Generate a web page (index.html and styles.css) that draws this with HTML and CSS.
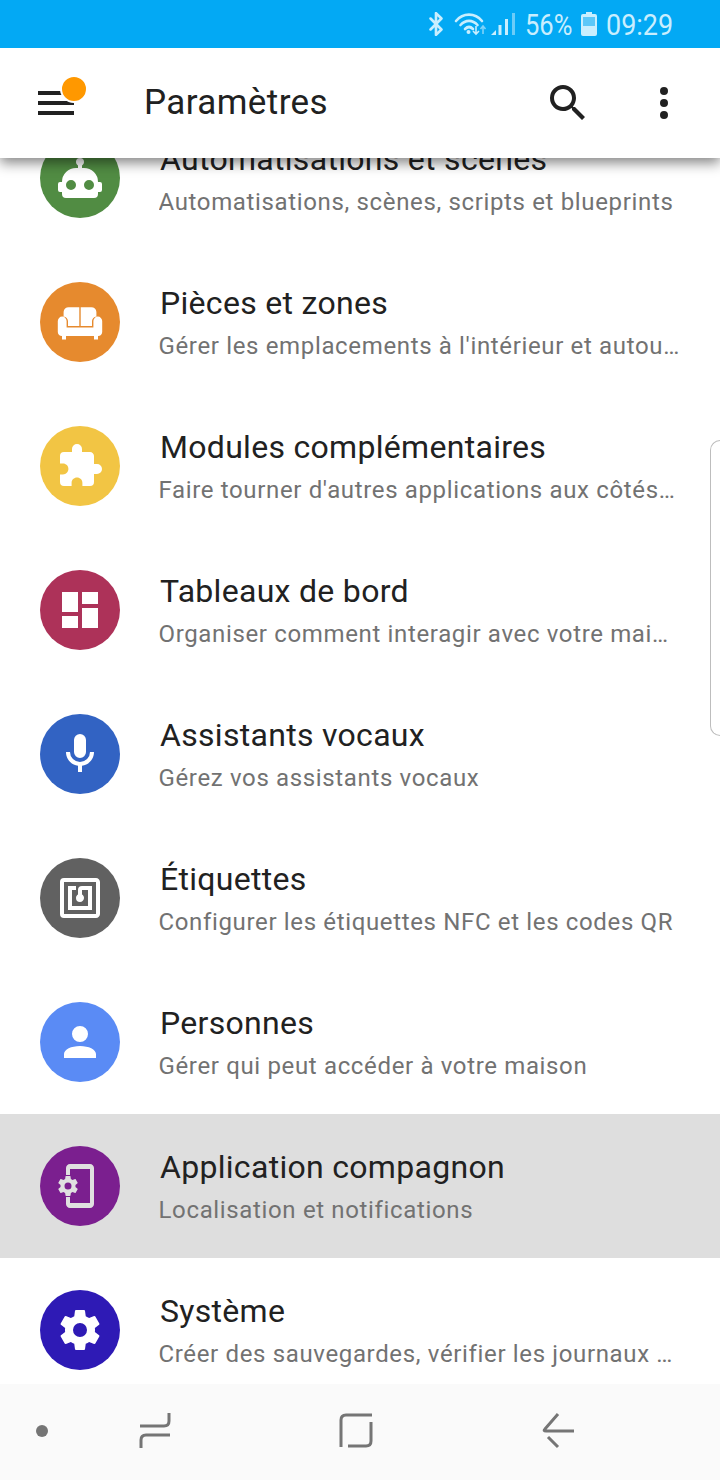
FILE: index.html
```html
<!DOCTYPE html>
<html lang="fr">
<head>
<meta charset="utf-8">
<title>Paramètres</title>
<link rel="stylesheet" href="styles.css">
</head>
<body>
<svg class="defs" width="0" height="0" aria-hidden="true">
  <symbol id="cog" viewBox="0 0 24 24"><path d="M12,15.5A3.5,3.5 0 0,1 8.5,12A3.5,3.5 0 0,1 12,8.5A3.5,3.5 0 0,1 15.5,12A3.5,3.5 0 0,1 12,15.5M19.43,12.97C19.47,12.65 19.5,12.33 19.5,12C19.5,11.67 19.47,11.34 19.43,11L21.54,9.37C21.73,9.22 21.78,8.95 21.66,8.73L19.66,5.27C19.54,5.05 19.27,4.96 19.05,5.05L16.56,6.05C16.04,5.66 15.5,5.32 14.87,5.07L14.5,2.42C14.46,2.18 14.25,2 14,2H10C9.75,2 9.54,2.18 9.5,2.42L9.13,5.07C8.5,5.32 7.96,5.66 7.44,6.05L4.95,5.05C4.73,4.96 4.46,5.05 4.34,5.27L2.34,8.73C2.21,8.95 2.27,9.22 2.46,9.37L4.57,11C4.53,11.34 4.5,11.67 4.5,12C4.5,12.33 4.53,12.65 4.57,12.97L2.46,14.63C2.27,14.78 2.21,15.05 2.34,15.27L4.34,18.73C4.46,18.95 4.73,19.03 4.95,18.95L7.44,17.94C7.96,18.34 8.5,18.68 9.13,18.93L9.5,21.58C9.54,21.82 9.75,22 10,22H14C14.25,22 14.46,21.82 14.5,21.58L14.87,18.93C15.5,18.67 16.04,18.34 16.56,17.94L19.05,18.95C19.27,19.03 19.54,18.95 19.66,18.73L21.66,15.27C21.78,15.05 21.73,14.78 21.54,14.63L19.43,12.97Z"/></symbol>
</svg>
<div class="app">
  <div class="status">
    <svg class="st-bt" viewBox="0 0 16 22"><path d="M3 6l10 10-5 5V1l5 5L3 16"/></svg>
    <svg class="st-wifi" viewBox="0 0 32 24"><path class="arc" d="M1 8C8-0.5 20-0.5 27 8M5.5 12C10.5 6.5 17.5 6.5 22.5 12M10 16C12.5 13.5 15.5 13.5 18 16"/><circle class="fill" cx="13.5" cy="19" r="2"/><path class="arrow" d="M21 13v8m-3-3l3 3 3-3"/><path class="arrow dim" d="M28 21v-8m-2.500 3l2.500-3 2.500 3"/></svg>
    <svg class="st-signal" viewBox="0 0 26 24"><path class="fill" d="M1 23l5-5v5z"/><rect class="fill" x="8.500" y="13" width="3" height="10"/><rect class="fill" x="15" y="7" width="3" height="16"/><rect class="fill dim" x="22" y="1" width="3" height="22"/></svg>
    <span class="st-pct">56%</span>
    <svg class="st-bat" viewBox="0 0 16 24"><path class="bat-body" d="M5 0h6v2h3a2 2 0 0 1 2 2v18a2 2 0 0 1-2 2H2a2 2 0 0 1-2-2V4a2 2 0 0 1 2-2h3z"/><rect class="bat-level" x="2" y="5" width="12" height="9"/></svg>
    <span class="st-time">09:29</span>
  </div>
  <header class="topbar">
    <div class="menu">
      <svg class="menu-bars" viewBox="0 0 36 24"><path d="M0 0h36v4H0zM0 10h36v4H0zM0 20h36v4H0z"/></svg>
      <span class="menu-badge"></span>
    </div>
    <h1 class="title">Paramètres</h1>
    <svg class="top-icon search" viewBox="0 0 24 24"><path d="M9.5,3A6.5,6.500 0 0,1 16,9.500C16,11.110 15.410,12.590 14.440,13.730L14.710,14H15.500L20.500,19L19,20.500L14,15.500V14.710L13.730,14.440C12.590,15.410 11.110,16 9.500,16A6.500,6.500 0 0,1 3,9.500A6.500,6.500 0 0,1 9.500,3M9.500,5C7,5 5,7 5,9.500C5,12 7,14 9.500,14C12,14 14,12 14,9.500C14,7 12,5 9.500,5Z"/></svg>
    <svg class="top-icon dots" viewBox="0 0 24 24"><path d="M12,16A2,2 0 0,1 14,18A2,2 0 0,1 12,20A2,2 0 0,1 10,18A2,2 0 0,1 12,16M12,10A2,2 0 0,1 14,12A2,2 0 0,1 12,14A2,2 0 0,1 10,12A2,2 0 0,1 12,10M12,4A2,2 0 0,1 14,6A2,2 0 0,1 12,8A2,2 0 0,1 10,6A2,2 0 0,1 12,4Z"/></svg>
  </header>
  <main class="list">
    <div class="row">
      <div class="badge c-green"><svg viewBox="0 0 24 24"><path d="M12,2A2,2 0 0,1 14,4C14,4.740 13.600,5.390 13,5.730V7H14A7,7 0 0,1 21,14H22A1,1 0 0,1 23,15V18A1,1 0 0,1 22,19H21V20A2,2 0 0,1 19,22H5A2,2 0 0,1 3,20V19H2A1,1 0 0,1 1,18V15A1,1 0 0,1 2,14H3A7,7 0 0,1 10,7H11V5.730C10.400,5.390 10,4.740 10,4A2,2 0 0,1 12,2M7.500,13A2.500,2.500 0 0,0 5,15.500A2.500,2.500 0 0,0 7.500,18A2.500,2.500 0 0,0 10,15.500A2.500,2.500 0 0,0 7.500,13M16.500,13A2.500,2.500 0 0,0 14,15.500A2.500,2.500 0 0,0 16.500,18A2.500,2.500 0 0,0 19,15.500A2.500,2.500 0 0,0 16.500,13Z"/></svg></div>
      <div class="text"><div class="name">Automatisations et scènes</div><div class="sub">Automatisations, scènes, scripts et blueprints</div></div>
    </div>
    <div class="row">
      <div class="badge c-orange"><svg viewBox="0 0 24 24"><path d="M3.800 7A2.500 2.500 0 0 1 6.300 4.600H11.650V14H6V11.500C6 10.400 5 9.300 3.800 9.200ZM12.350 4.600H17.700A2.500 2.500 0 0 1 20.200 7V9.200C19 9.300 18 10.400 18 11.500V14H12.350ZM0.900 11.500A2.200 2.200 0 0 1 5.300 11.500V14.700H18.700V11.500A2.200 2.200 0 0 1 23.100 11.500V17A2 2 0 0 1 21 19V20.700H19V19H5V20.700H3V19A2 2 0 0 1 0.900 17Z"/></svg></div>
      <div class="text"><div class="name">Pièces et zones</div><div class="sub">Gérer les emplacements à l'intérieur et autour de votre maison</div></div>
    </div>
    <div class="row">
      <div class="badge c-yellow"><svg viewBox="0 0 24 24"><path d="M20.500,11H19V7C19,5.890 18.100,5 17,5H13V3.500A2.500,2.500 0 0,0 10.500,1A2.500,2.500 0 0,0 8,3.500V5H4A2,2 0 0,0 2,7V10.800H3.500C5,10.800 6.200,12 6.200,13.500C6.200,15 5,16.200 3.500,16.200H2V20A2,2 0 0,0 4,22H7.800V20.500C7.800,19 9,17.800 10.500,17.800C12,17.800 13.200,19 13.200,20.500V22H17A2,2 0 0,0 19,20V16H20.500A2.500,2.500 0 0,0 23,13.500A2.500,2.500 0 0,0 20.500,11Z"/></svg></div>
      <div class="text"><div class="name">Modules complémentaires</div><div class="sub">Faire tourner d'autres applications aux côtés de Home Assistant</div></div>
    </div>
    <div class="row">
      <div class="badge c-pink"><svg viewBox="0 0 24 24"><path d="M13,3V9H21V3M13,21H21V11H13M3,21H11V15H3M3,13H11V3H3V13Z"/></svg></div>
      <div class="text"><div class="name">Tableaux de bord</div><div class="sub">Organiser comment interagir avec votre maison</div></div>
    </div>
    <div class="row">
      <div class="badge c-blue"><svg viewBox="0 0 24 24"><path d="M12,2A3,3 0 0,1 15,5V11A3,3 0 0,1 12,14A3,3 0 0,1 9,11V5A3,3 0 0,1 12,2M19,11C19,14.530 16.390,17.440 13,17.930V21H11V17.930C7.610,17.440 5,14.530 5,11H7A5,5 0 0,0 12,16A5,5 0 0,0 17,11H19Z"/></svg></div>
      <div class="text"><div class="name">Assistants vocaux</div><div class="sub">Gérez vos assistants vocaux</div></div>
    </div>
    <div class="row">
      <div class="badge c-gray"><svg viewBox="0 0 24 24"><path d="M18,6H13A2,2 0 0,0 11,8V10.280C10.410,10.620 10,11.260 10,12A2,2 0 0,0 12,14C13.110,14 14,13.100 14,12C14,11.260 13.600,10.620 13,10.280V8H16V16H8V8H10V6H8L6,6V18H18M20,20H4V4H20M20,2H4A2,2 0 0,0 2,4V20A2,2 0 0,0 4,22H20C21.110,22 22,21.100 22,20V4C22,2.890 21.110,2 20,2Z"/></svg></div>
      <div class="text"><div class="name">Étiquettes</div><div class="sub">Configurer les étiquettes NFC et les codes QR</div></div>
    </div>
    <div class="row">
      <div class="badge c-sky"><svg viewBox="0 0 24 24"><path d="M12,4A4,4 0 0,1 16,8A4,4 0 0,1 12,12A4,4 0 0,1 8,8A4,4 0 0,1 12,4M12,14C16.420,14 20,15.790 20,18V20H4V18C4,15.790 7.580,14 12,14Z"/></svg></div>
      <div class="text"><div class="name">Personnes</div><div class="sub">Gérer qui peut accéder à votre maison</div></div>
    </div>
    <div class="row row-active">
      <div class="badge c-purple"><svg class="soft" viewBox="0 0 24 24"><path d="M7 1C5.900 1 5 1.900 5 3V6.500H7V3.500H17V20.500H7V17.500H5V21C5 22.100 5.900 23 7 23H17C18.100 23 19 22.100 19 21V3C19 1.900 18.100 1 17 1Z"/><use href="#cog" x="0" y="6" width="12" height="12"/></svg></div>
      <div class="text"><div class="name">Application compagnon</div><div class="sub">Localisation et notifications</div></div>
    </div>
    <div class="row">
      <div class="badge c-indigo"><svg viewBox="0 0 24 24"><use href="#cog"/></svg></div>
      <div class="text"><div class="name">Système</div><div class="sub">Créer des sauvegardes, vérifier les journaux ou redémarrer le système</div></div>
    </div>
  </main>
  <div class="edge"></div>
  <nav class="navbar">
    <svg class="nav-svg" viewBox="0 0 720 96"><circle class="nav-dot" cx="42" cy="47" r="6"/><path class="nav-line" d="M169 29V37Q169 42 164 42H140M170 51H146Q141 51 141 56V64M372 31H346Q341 31 341 36V63M348 62H366Q371 62 371 57V38M558 30L545 45Q543 47 546 47H574M548 53L558 63"/></svg>
  </nav>
</div>
</body>
</html>
```
FILE: styles.css
```css
* { box-sizing: border-box; }
html, body { margin: 0; padding: 0; background: #fff; }
body { font-family: Roboto, "Liberation Sans", sans-serif; }
.defs { position: absolute; }
.app { position: relative; width: 720px; height: 1480px; overflow: hidden; display: flex; flex-direction: column; }

.status { height: 48px; flex: none; background: #03a9f4; color: #c9eefe; display: flex; align-items: center; padding-left: 427px; position: relative; z-index: 3; }
.status svg { flex: none; display: block; }
.st-bt { width: 18px; height: 24px; fill: none; stroke: #c9eefe; stroke-width: 2.4; stroke-linejoin: round; stroke-linecap: round; margin-right: 9px; }
.st-wifi { width: 34px; height: 24px; margin-top: 1px; fill: none; }
.st-wifi .arc { stroke: #c9eefe; stroke-width: 2.6; stroke-linecap: round; }
.st-wifi .arrow { stroke: #c9eefe; stroke-width: 1.6; }
.st-wifi .fill, .st-signal .fill { fill: #c9eefe; stroke: none; }
.st-wifi .dim { stroke: #7fd2f9; }
.st-signal .dim { fill: #6cccf8; }
.st-signal { width: 26px; height: 24px; margin-left: 2px; margin-right: 9px; }
.st-pct, .st-time { font-size: 29px; line-height: 48px; margin-top: 2px; white-space: nowrap; transform-origin: left center; display: block; }
.st-pct { width: 46px; margin-right: 10px; transform: scaleX(.88); }
.st-bat { width: 16px; height: 24px; margin-right: 9px; }
.bat-body { fill: #c9eefe; }
.bat-level { fill: #5cc7f8; }
.st-time { width: 66px; transform: scaleX(.93); }

.topbar { height: 110px; flex: none; background: #fff; position: relative; z-index: 2; display: flex; align-items: center; box-shadow: 0 5px 12px rgba(0, 0, 0, .48); }
.menu { position: relative; width: 36px; height: 24px; margin-left: 38px; flex: none; }
.menu-bars { display: block; width: 36px; height: 24px; fill: #212121; }
.menu-badge { position: absolute; left: 22px; top: -16px; width: 28px; height: 28px; border-radius: 50%; background: #ff9800; border: 2px solid #fff; }
.title { margin: 0 0 0 70px; font-size: 35px; font-weight: 400; color: #212121; letter-spacing: .4px; flex: 1; line-height: 44px; }
.top-icon { width: 48px; height: 48px; fill: #212121; flex: none; display: block; }
.search { margin-right: 48px; }
.dots { margin-right: 32px; }

.list { flex: 1; min-height: 0; margin-top: -52px; overflow: hidden; position: relative; z-index: 1; }
.row { height: 144px; display: flex; align-items: center; padding: 0 40px; gap: 40px; background: #fff; }
.row-active { background: #dedede; }
.badge { width: 80px; height: 80px; border-radius: 50%; flex: none; display: flex; align-items: center; justify-content: center; }
.badge svg { width: 48px; height: 48px; fill: #fff; display: block; }
.badge svg.soft { fill: #e0e0e0; }
.c-green { background: #518c43; }
.c-orange { background: #e68a2e; }
.c-yellow { background: #f2c544; }
.c-pink { background: #ad3259; }
.c-blue { background: #3263c3; }
.c-gray { background: #616161; }
.c-sky { background: #5a8bf5; }
.c-purple { background: #7b1f8f; }
.c-indigo { background: #2e1ab5; }
.text { flex: 1; min-width: 0; }
.name { font-size: 32px; line-height: 48px; padding-top: 1px; color: #212121; letter-spacing: .3px; white-space: nowrap; overflow: hidden; text-overflow: ellipsis; }
.sub { font-size: 24px; line-height: 40px; margin: -1px -.5px 0 -1.5px; color: #727272; letter-spacing: .65px; white-space: nowrap; overflow: hidden; text-overflow: ellipsis; }

.edge { position: absolute; right: 0; top: 440px; width: 10px; height: 296px; border: 1.5px solid #bdbdbd; border-right: 0; border-radius: 10px 0 0 10px; background: #fff; z-index: 1; }

.navbar { height: 96px; flex: none; background: #fafafa; position: relative; z-index: 2; }
.nav-svg { display: block; width: 720px; height: 96px; }
.nav-dot { fill: #757575; }
.nav-line { fill: none; stroke: #757575; stroke-width: 3; }
```
